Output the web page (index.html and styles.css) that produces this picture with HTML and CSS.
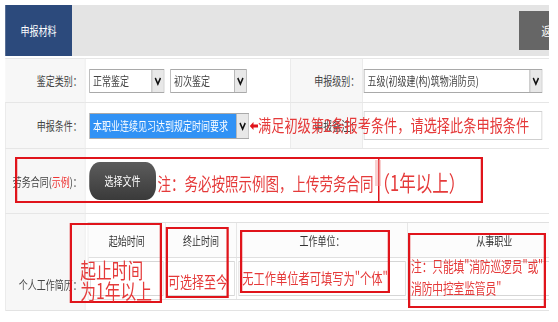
FILE: index.html
```html
<!DOCTYPE html>
<html lang="zh-CN">
<head>
    <meta charset="UTF-8">
    <meta name="viewport" content="width=device-width, initial-scale=1.0">
    <title>申报材料</title>
    <link rel="stylesheet" href="styles.css">
</head>
<body>
<div class="page">
    <div class="topbar">
        <div class="tab">申报材料</div>
        <div class="back">返回</div>
    </div>

    <div class="form">
        <!-- row 1 -->
        <div class="lbl">鉴定类别：</div>
        <div class="fld">
            <div class="select w100"><span class="select-text">正常鉴定</span><span class="select-btn"><svg width="11" height="10" viewBox="0 0 11 10"><polyline points="2,2 5.5,8 9,2" fill="none" stroke="#111" stroke-width="2"/></svg></span></div>
            <div class="select w102"><span class="select-text">初次鉴定</span><span class="select-btn"><svg width="11" height="10" viewBox="0 0 11 10"><polyline points="2,2 5.5,8 9,2" fill="none" stroke="#111" stroke-width="2"/></svg></span></div>
        </div>
        <div class="lbl">申报级别：</div>
        <div class="fld fld-right">
            <div class="select w238"><span class="select-text">五级(初级建(构)筑物消防员)</span><span class="select-btn"><svg width="11" height="10" viewBox="0 0 11 10"><polyline points="2,2 5.5,8 9,2" fill="none" stroke="#111" stroke-width="2"/></svg></span></div>
        </div>

        <!-- row 2 -->
        <div class="lbl">申报条件：</div>
        <div class="fld">
            <div class="select select-active w213"><span class="select-text">本职业连续见习达到规定时间要求</span><span class="select-btn"><svg width="11" height="10" viewBox="0 0 11 10"><polyline points="2,2 5.5,8 9,2" fill="none" stroke="#111" stroke-width="2"/></svg></span></div>
        </div>
        <div class="lbl">申报备注：</div>
        <div class="fld fld-right">
            <div class="text-input"></div>
        </div>

        <!-- row 3 -->
        <div class="lbl">劳务合同(<span class="red">示例</span>)：</div>
        <div class="fld span3">
            <div class="file-btn">选择文件</div>
            <div class="upload-note">注：务必按照示例图，上传劳务合同<span class="big">（1年以上）</span></div>
        </div>

        <!-- row 4 -->
        <div class="lbl lbl-top">个人工作简历：</div>
        <div class="fld span3 fld-table">
            <div class="jobs">
                <div class="jobs-head">起始时间</div>
                <div class="jobs-head">终止时间</div>
                <div class="jobs-head">工作单位：</div>
                <div class="jobs-head">从事职业</div>
                <div class="jobs-cell"><div class="cell-input"></div></div>
                <div class="jobs-cell"><div class="cell-input"></div></div>
                <div class="jobs-cell"><div class="cell-input"></div></div>
                <div class="jobs-cell"><div class="cell-input"></div></div>
            </div>
        </div>
    </div>

    <!-- red annotations drawn over the form -->
    <svg class="mark-arrow" width="11" height="10" viewBox="0 0 11 10"><path d="M0 5 L5 1 L5 3.5 L11 3.5 L11 6.5 L5 6.5 L5 9 Z" fill="#e0141b"/></svg>
    <div class="mark-note">满足初级第2条报考条件，请选择此条申报条件</div>
    <div class="mark-box box-upload"></div>
    <div class="mark-line"></div>
    <div class="mark-cursor"></div>
    <div class="mark-box box-start">起止时间<br>为1年以上</div>
    <div class="mark-box box-end">可选择至今</div>
    <div class="mark-box box-unit">无工作单位者可填写为"个体"</div>
    <div class="mark-box box-job">注：只能填"消防巡逻员"或"<br>消防中控室监管员"</div>
</div>
</body>
</html>
```

FILE: styles.css
```css
body {
    margin: 0;
    font-family: "Noto Sans CJK SC", "Liberation Sans", sans-serif;
    font-size: 12px;
    color: #444;
    background: #fff;
    overflow: hidden;
}
/* the screenshot is squeezed horizontally, so lay out wide and squeeze */
.page {
    position: relative;
    width: 732px;
    height: 322px;
    overflow: hidden;
    transform: scaleX(0.75);
    transform-origin: 0 0;
}
.topbar {
    display: flex;
    align-items: center;
    margin: 5px 0 0 7px;
    height: 51px;
    background: #e4e4e4;
}
.tab {
    width: 89px;
    height: 100%;
    background: #2c4a7c;
    color: #fff;
    display: flex;
    align-items: center;
    justify-content: center;
}
.back {
    margin-left: auto;
    width: 40px;
    height: 39px;
    line-height: 39px;
    padding-left: 30px;
    box-sizing: border-box;
    background: #666;
    color: #fff;
    white-space: nowrap;
    overflow: hidden;
}
.form {
    display: grid;
    grid-template-columns: 106px 274px 96px 256px;
    grid-template-rows: 44px 46px 65px 97px;
    margin: 2px 0 0 7px;
    border-bottom: 1px solid #e3e3e3;
}
.lbl {
    display: flex;
    align-items: center;
    justify-content: flex-end;
    padding-right: 4px;
    background: #f7f7f7;
    border-top: 1px solid #e6e6e6;
    white-space: nowrap;
}
.lbl + .fld,
.fld + .lbl {
    border-left: 1px solid #e6e6e6;
}
.lbl-top {
    align-items: flex-start;
    padding-top: 62px;
}
.fld {
    display: flex;
    align-items: center;
    gap: 8px;
    padding-left: 5px;
    border-top: 1px solid #e6e6e6;
}
.fld-right {
    padding-left: 1px;
}
.span3 {
    grid-column: span 3;
}
.fld-table {
    align-items: flex-start;
    padding: 8px 0 0 3px;
}
.red {
    color: #e33;
}
.select {
    display: flex;
    height: 24px;
    border: 1px solid #a9a9a9;
    background: #fff;
    box-sizing: border-box;
}
.select-text {
    flex: 1;
    padding-left: 4px;
    line-height: 22px;
    white-space: nowrap;
    overflow: hidden;
}
.select-btn {
    width: 15px;
    display: flex;
    align-items: center;
    justify-content: center;
    background: #e8e8e8;
    border-left: 1px solid #a9a9a9;
}
.select-active {
    height: 26px;
}
.select-active .select-text {
    background: #3192f5;
    color: #fff;
    line-height: 24px;
}
.w100 { width: 100px; }
.w102 { width: 102px; }
.w213 { width: 213px; }
.w238 { width: 238px; }
.text-input {
    width: 238px;
    height: 29px;
    border: 1px solid #cfcfcf;
    box-sizing: border-box;
    background: #fff;
}
.file-btn {
    width: 89px;
    height: 38px;
    line-height: 38px;
    text-align: center;
    color: #fff;
    border-radius: 14px;
    background: linear-gradient(#5c5c5c, #3a3a3a);
}
.upload-note {
    margin-left: -6px;
    color: #e53a3a;
    font-size: 18px;
    white-space: nowrap;
}
.upload-note .big {
    font-size: 22px;
}
.jobs {
    display: grid;
    grid-template-columns: 103px 95px 228px 231px;
    grid-template-rows: 35px 42px;
    border-top: 1px solid #e0e0e0;
    border-left: 1px solid #e0e0e0;
}
.jobs-head,
.jobs-cell {
    border-right: 1px solid #e0e0e0;
    border-bottom: 1px solid #e0e0e0;
}
.jobs-head {
    display: flex;
    align-items: center;
    justify-content: center;
    background: #fcfcfc;
    color: #333;
}
.jobs-cell {
    padding: 3px 2px;
}
.cell-input {
    height: 100%;
    border: 1px solid #d6d6d6;
    box-sizing: border-box;
    background: #fff;
}
.mark-arrow {
    position: absolute;
    left: 333px;
    top: 121px;
}
.mark-note {
    position: absolute;
    left: 344px;
    top: 114px;
    font-size: 17.6px;
    line-height: 22px;
    color: #e53a3a;
    white-space: nowrap;
}
.mark-box {
    position: absolute;
    box-sizing: border-box;
    border: 2px solid #e0141b;
    border-left-width: 3px;
    border-right-width: 3px;
    color: #e53a3a;
    white-space: nowrap;
}
.box-upload {
    left: 20px;
    top: 157px;
    width: 624px;
    height: 46px;
}
.mark-line {
    position: absolute;
    left: 504px;
    top: 157px;
    width: 2px;
    height: 46px;
    background: #e0141b;
}
.mark-cursor {
    position: absolute;
    left: 500px;
    top: 160px;
    width: 8px;
    height: 26px;
    background: rgba(240, 150, 150, 0.45);
}
.box-start {
    left: 93px;
    top: 223px;
    width: 123px;
    height: 80px;
    padding: 34px 0 0 11px;
    font-size: 21px;
    line-height: 21px;
}
.box-end {
    left: 221px;
    top: 227px;
    width: 84px;
    height: 71px;
    padding-top: 43px;
    text-align: center;
    font-size: 16px;
    line-height: 18px;
}
.box-unit {
    left: 320px;
    top: 230px;
    width: 200px;
    height: 63px;
    padding-top: 37px;
    text-align: center;
    font-size: 15px;
    line-height: 18px;
}
.box-job {
    left: 544px;
    top: 233px;
    width: 184px;
    height: 75px;
    padding: 20px 0 0 1px;
    font-size: 14.4px;
    line-height: 22px;
    letter-spacing: -0.2px;
}
```
